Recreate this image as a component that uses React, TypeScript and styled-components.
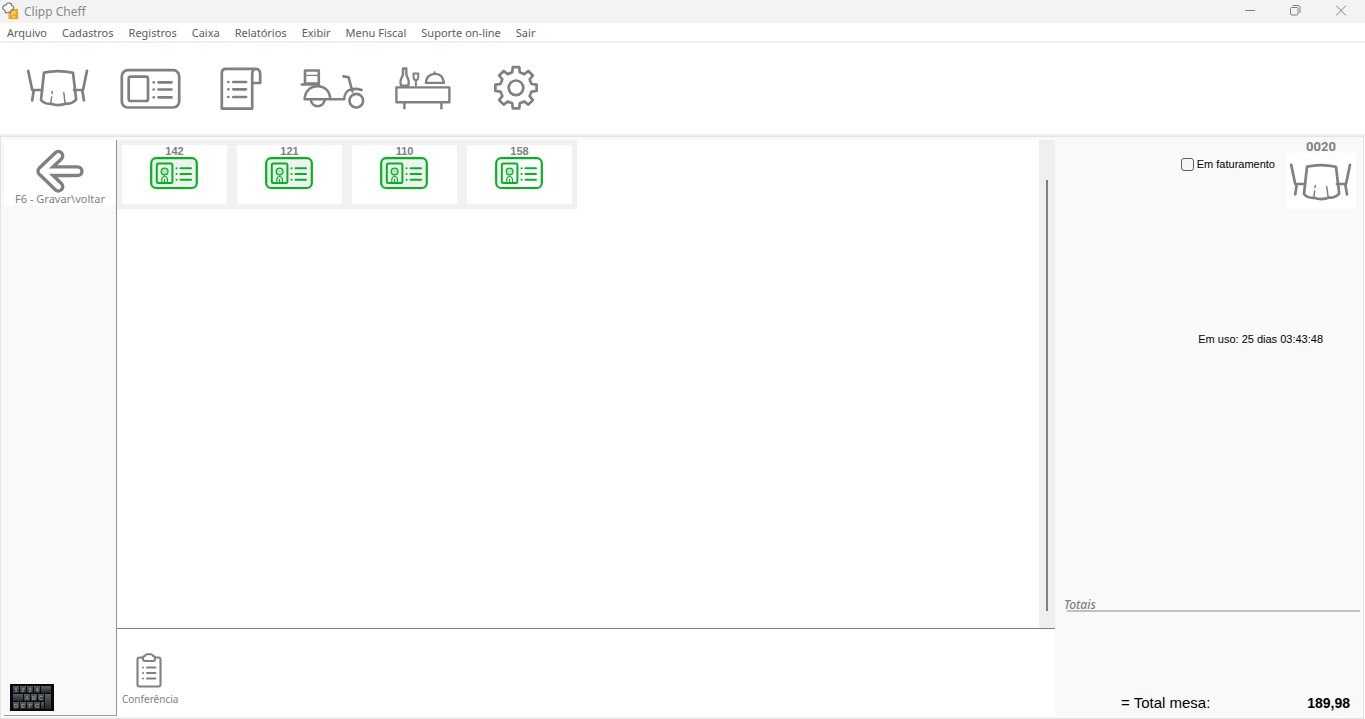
import React from "react";
import styled, { createGlobalStyle } from "styled-components";

const uiFont = '"Noto Sans", "Open Sans", sans-serif';
const labelFont = '"Liberation Sans", Arial, sans-serif';

const GlobalStyle = createGlobalStyle`
  * { box-sizing: border-box; }
  body { margin: 0; background: #ffffff; font-family: ${uiFont}; }
  button { border: 0; padding: 0; background: none; font: inherit; color: inherit; cursor: pointer; }
  h1, h2, p { margin: 0; font-weight: normal; }
  svg { display: block; }
`;

const Window = styled.div`
  display: flex;
  flex-direction: column;
  min-height: 100vh;
`;

const TitleBar = styled.header`
  display: flex;
  align-items: flex-start;
  height: 23px;
  padding: 0 1px 0 2px;
  background: #f3f3f3;
`;

const Title = styled.h1`
  flex: 1;
  margin-left: 4px;
  font-size: 12px;
  line-height: 23px;
  color: #8a8a8a;
`;

const WindowButton = styled.button`
  display: flex;
  align-items: center;
  justify-content: center;
  width: 46px;
  height: 21px;
`;

const MenuBar = styled.nav`
  display: flex;
  gap: 15px;
  height: 20px;
  padding-left: 7px;
  border-bottom: 2px solid #f0f0f0;
`;

const MenuItem = styled.button`
  font-size: 11px;
  line-height: 20px;
  color: #5c5c5c;
  white-space: nowrap;
`;

const Toolbar = styled.div`
  display: flex;
  align-items: center;
  height: 93px;
  padding: 0 0 2px 11px;
  border-bottom: 2px solid #f0f0f0;
`;

const ToolButton = styled.button`
  display: flex;
  justify-content: center;
  width: 92px;
`;

const Workspace = styled.main`
  flex: 1;
  display: grid;
  grid-template-columns: 113px minmax(0, 1fr) 308px;
  margin-right: 1px;
  padding: 3px 0 2px 3px;
  border: 1px solid #e4e4e4;
  background: #f9f9f9;
`;

const Sidebar = styled.aside`
  display: flex;
  flex-direction: column;
  justify-content: space-between;
  align-items: flex-start;
  border-right: 1px solid #909090;
  border-bottom: 1px solid #a0a0a0;
`;

const BackButton = styled.button`
  display: flex;
  flex-direction: column;
  align-items: center;
  width: 100%;
  height: 65px;
  padding-top: 9px;
  background: #ffffff;
  font-size: 11px;
  line-height: 12px;
  color: #808080;
  white-space: nowrap;
`;

const KeyboardButton = styled.button`
  margin: 0 0 4px 6px;
`;

const Center = styled.section`
  display: flex;
  flex-direction: column;
  background: #ffffff;
`;

const CardArea = styled.div`
  flex: 1;
  display: flex;
  justify-content: space-between;
  align-items: flex-start;
  border-bottom: 1px solid #808080;
`;

const CardStrip = styled.div`
  display: flex;
  gap: 10px;
  padding: 5px;
  background: #f1f1f1;
`;

const CardTile = styled.button`
  display: flex;
  flex-direction: column;
  align-items: center;
  width: 105px;
  height: 59px;
  background: #ffffff;
  font-family: ${labelFont};
  font-size: 11px;
  font-weight: bold;
  line-height: 12px;
  color: #808080;
`;

const ScrollTrack = styled.div`
  align-self: stretch;
  display: flex;
  justify-content: center;
  width: 16px;
  padding: 40px 0 17px;
  background: #efefef;
`;

const ScrollThumb = styled.div`
  width: 2px;
  background: #808080;
`;

const Actions = styled.div`
  display: flex;
  height: 87px;
  padding: 24px 0 0 5px;
`;

const ActionButton = styled.button`
  display: flex;
  flex-direction: column;
  align-items: flex-start;
  gap: 3px;
  height: 54px;
  font-size: 10px;
  line-height: 14px;
  color: #808080;
  svg { margin-left: 14px; }
`;

const Details = styled.aside`
  display: flex;
  flex-direction: column;
  font-family: ${labelFont};
  color: #000000;
`;

const DetailsHeader = styled.div`
  display: flex;
  justify-content: flex-end;
  gap: 11px;
  padding-right: 7px;
`;

const BillingLabel = styled.label`
  display: flex;
  align-items: center;
  gap: 3px;
  height: 15px;
  margin-top: 17px;
  font-size: 11px;
  line-height: 15px;
  white-space: nowrap;
`;

const CheckBox = styled.input`
  appearance: none;
  width: 13px;
  height: 13px;
  margin: 0;
  border: 1px solid #5f5f5f;
  border-radius: 3px;
  background: #f6f6f6;
  &:checked { background: #5f5f5f; }
`;

const TableBadge = styled.div`
  width: 70px;
  text-align: center;
  font-family: Roboto, sans-serif;
  font-size: 13px;
  font-weight: bold;
  line-height: 13px;
  color: #808080;
`;

const TablePicture = styled.div`
  padding: 5px 4px 3px 2px;
  background: #ffffff;
`;

const UsageTime = styled.p`
  margin: 123px 40px 0 0;
  text-align: right;
  font-size: 11px;
  line-height: 14px;
`;

const Totals = styled.section`
  margin-top: auto;
`;

const TotalsTitle = styled.h2`
  margin: 0 3px 0 12px;
  border-bottom: 2px solid #c0c0c0;
  font-family: ${uiFont};
  font-size: 12px;
  font-style: italic;
  font-weight: 500;
  line-height: 11px;
  text-indent: -3px;
  color: #808080;
`;

const TotalRow = styled.div`
  display: flex;
  justify-content: space-between;
  margin-top: 82px;
  padding: 0 13px 4px 66px;
  font-size: 15px;
  line-height: 18px;
`;

const TotalValue = styled.strong`
  font-size: 14px;
`;

const Stroke = styled.svg`
  fill: none;
  stroke: #808080;
  stroke-width: 2.7;
  stroke-linecap: round;
  stroke-linejoin: round;
`;

const ToolIcon = ({ children }: { children: React.ReactNode }) => (
  <Stroke width="64" height="48" viewBox="0 0 64 48" overflow="visible" aria-hidden="true">
    {children}
  </Stroke>
);

const TableIcon = () => (
  <ToolIcon>
    <path d="M3.2 6.8 7.2 26H17M8.6 27 7.2 36.5M62 6.8 58 26H49M57.4 27 59 36.5" />
    <path d="M19 8.6Q33 5.4 48 8.8L51.2 35.6Q47 40 41.5 39.6Q33.5 42.5 26 39.8Q19.5 40.2 16 36Z" />
    <path d="M27.4 27.5 26.9 29.5M26.6 33 26 38.5M38.8 28.5 40 38.5" strokeWidth="1.5" />
  </ToolIcon>
);

const CardIcon = () => (
  <ToolIcon>
    <rect x="4.8" y="6.2" width="57.4" height="37.3" rx="6" />
    <rect x="11.7" y="12.7" width="19.3" height="24.3" rx="2" />
    <path d="M41.5 18.3H54.5M41.5 25.5H54.5M41.5 33.3H54.5M36.7 18.3h.1M36.7 25.5h.1M36.7 33.3h.1" />
  </ToolIcon>
);

const ReceiptIcon = () => (
  <ToolIcon>
    <path d="M12.8 44.6V9Q12.8 4.8 17 4.8H47Q51.2 5 51.2 10.5V19H43.2M43.2 44.6V10.5Q43.2 5 47 5M12.8 44.6H43.2" />
    <path d="M24.3 18H37M24.3 25.3H37M24.3 33H37M19.3 18h.1M19.3 25.3h.1M19.3 33h.1" />
  </ToolIcon>
);

const ScooterIcon = () => (
  <ToolIcon>
    <g strokeWidth="2.6">
      <path d="M4 19.5V6.5H17.8V19.5Z" />
      <path d="M5 11.3H17" strokeWidth="1.3" />
      <path d="M.8 20.5H18" />
      <path d="M3.6 35.2C4 27 9.5 22.3 16.6 22.3S29 27 29.2 35.2M3.6 35.2H43.2C43.4 29.5 46.5 25.5 51 25.2Q56 24.2 60.6 26" />
      <path d="M42.5 12.4 47.6 13.3 51.4 27.5" />
      <path d="M9.9 36.5a6.9 6.9 0 0 0 13.6 0" />
      <circle cx="55.3" cy="36.7" r="6.8" />
    </g>
  </ToolIcon>
);

const BuffetIcon = () => (
  <ToolIcon>
    <g strokeWidth="2.4">
      <path d="M3.4 23.4H56.4V38.2H3.4ZM11.4 38.5V45.3M48.4 38.5V45.3" strokeLinecap="butt" />
      <path d="M10 4.5h3.3v5q0 2 1.4 4.5q1.3 2.5 1 5l-.6 2.8h-7l-.6-2.8q-.3-2.5 1-5q1.5-2.5 1.5-4.5Z" />
      <path d="M20.4 9.5h5l-.3 4.5q-.5 2.2-2.2 2.2t-2.2-2.2ZM22.9 16.5V21.5" strokeWidth="2" />
      <path d="M33 18.9q.3-8.4 8.5-9t9.5 9ZM41.5 8.5v.6" />
    </g>
  </ToolIcon>
);

const gearPoints = Array.from({ length: 8 }, (_, i) => {
  const a = (i * Math.PI) / 4;
  return [[15.5, -3.8], [20.6, -3.2], [20.6, 3.2], [15.5, 3.8]]
    .map(([r, w]) => `${(31 + r * Math.sin(a) + w * Math.cos(a)).toFixed(2)},${(23.8 - r * Math.cos(a) + w * Math.sin(a)).toFixed(2)}`)
    .join(" ");
}).join(" ");

const GearIcon = () => (
  <ToolIcon>
    <polygon points={gearPoints} />
    <circle cx="31" cy="23.8" r="7.3" />
  </ToolIcon>
);

const BackArrow = () => (
  <Stroke width="48" height="45" viewBox="0 0 48 45" aria-hidden="true">
    <path d="M22.3 7 6 22.7 22.3 38.5M6 22.7H42" strokeWidth="12.4" />
    <path d="M22.3 7 6 22.7 22.3 38.5M6 22.7H42" stroke="#fff" strokeWidth="5.4" />
  </Stroke>
);

const GreenCard = ({ shaded }: { shaded: boolean }) => (
  <svg width="49" height="33" viewBox="0 0 49 33" fill="none" stroke="#00b61c" aria-hidden="true">
    {shaded && <path d="M0 0H48V33H0Z" fill="#f1f1f1" stroke="none" />}
    <rect x="1.2" y="1.2" width="45.6" height="29.8" rx="5" strokeWidth="2.2" />
    <rect x="6.8" y="6.6" width="15.6" height="19.4" rx="1.5" strokeWidth="2" />
    <circle cx="14.6" cy="14.6" r="3.4" fill="#b5e5bc" strokeWidth="1.3" />
    <path d="M11.8 25V22.5Q12 19.5 14.6 19.5T17.4 22.5V25M14.6 22V25" strokeWidth="1.2" />
    <path d="M30.5 11.3H41M30.5 17H41M30.5 22.8H41M26.5 11.3h.1M26.5 17h.1M26.5 22.8h.1" strokeWidth="2" strokeLinecap="round" />
  </svg>
);

const ClipboardIcon = () => (
  <Stroke width="26" height="36" viewBox="0 0 26 36" aria-hidden="true">
    <g strokeWidth="2.1">
      <path d="M7 4.5H3.500Q1.500 4.500 1.500 6.500V31.500Q1.500 33.500 3.500 33.500H22.500Q24.500 33.500 24.500 31.500V6.500Q24.500 4.500 22.500 4.500H19" />
      <path d="M9 3Q9.500 1.200 11 1.200H15Q16.500 1.200 17 3Q19 3 19 5V6Q19 8 17 8H9Q7 8 7 6V5Q7 3 9 3Z" />
      <path d="M11 14.500H19.500M11 20H19.500M11 25.500H19.500M7 14.500h.1M7 20h.1M7 25.500h.1" strokeWidth="1.900" />
    </g>
  </Stroke>
);

const keyRows = [
  [[3, 6, "1"], [10, 6, "2"], [17, 6, "3"], [24, 6, "4"], [31, 10, ""]],
  [[3, 10, ""], [14, 6, "A"], [21, 6, "B"], [28, 6, "C"], [35, 6, ""]],
  [[3, 6, "D"], [10, 6, "E"], [17, 6, "F"], [24, 6, "G"], [31, 3, ""]],
] as [number, number, string][][];

const KeyboardIcon = () => (
  <svg width="44" height="27" viewBox="0 0 44 27" aria-hidden="true">
    <defs>
      <linearGradient id="key" x1="0" y1="0" x2="0" y2="1">
        <stop offset="0" stopColor="#5c6063" />
        <stop offset="1" stopColor="#23272a" />
      </linearGradient>
    </defs>
    <rect width="44" height="27" fill="#07090d" />
    {keyRows.map((row, y) =>
      row.map(([x, w, key]) => (
        <g key={`${x}-${y}`}>
          <rect x={x} y={2 + y * 8} width={w} height="7" fill="url(#key)" />
          <text x={x + 3} y={8 + y * 8} textAnchor="middle" fontSize="6" fontFamily="Liberation Sans, sans-serif" fontWeight="bold" fill="#8e9294">
            {key}
          </text>
        </g>
      ))
    )}
    <rect x="35" y="10" width="6" height="15" fill="url(#key)" />
  </svg>
);

const AppLogo = () => (
  <svg width="18" height="20" viewBox="0 -2 18 20" aria-hidden="true">
    <rect x="6.500" y="7" width="9.500" height="10" fill="#f6a30c" />
    <path d="M13.500 9.500Q10 9.500 10 12.500T13.500 15M10.500 11.500h3.500" fill="none" stroke="#fbd084" strokeWidth="1.400" />
    <path d="M3.500 11 3 8.500Q-.2 7 1 4.500Q2 2.700 4 3.200Q5 .3 7.500 1.200Q9.700 1.400 9.600 3.500Q12.300 4 11.500 6.500Q11 8 9.300 8L8.500 9.800Z" fill="#f9f9f9" stroke="#777" strokeWidth="1.200" strokeLinejoin="round" />
  </svg>
);

const windowControls = [
  { label: "Minimizar", path: "M1 5.500H11" },
  { label: "Restaurar", path: "M.5 3.500Q.5 2.500 1.500 2.500H7Q8 2.500 8 3.500V9Q8 10 7 10H1.500Q.5 10 .5 9ZM2.500 .5H8Q10 .5 10 2.500V8" },
  { label: "Fechar", path: "M0 .5 10 10.500M10 .5 0 10.500" },
];

const menus = ["Arquivo", "Cadastros", "Registros", "Caixa", "Relatórios", "Exibir", "Menu Fiscal", "Suporte on-line", "Sair"];

const tools = [
  { label: "Mesas", Icon: TableIcon },
  { label: "Cartões", Icon: CardIcon },
  { label: "Comandas", Icon: ReceiptIcon },
  { label: "Entregas", Icon: ScooterIcon },
  { label: "Balcão", Icon: BuffetIcon },
  { label: "Configurações", Icon: GearIcon },
];

const cards = [
  { number: "142", shaded: true },
  { number: "121", shaded: true },
  { number: "110", shaded: true },
  { number: "158", shaded: false },
];

export default function App() {
  return (
    <Window>
      <GlobalStyle />
      <TitleBar>
        <AppLogo />
        <Title>Clipp Cheff</Title>
        {windowControls.map(({ label, path }) => (
          <WindowButton key={label} aria-label={label}>
            <svg width="11" height="11" viewBox="0 0 11 11" fill="none" stroke="#808080">
              <path d={path} />
            </svg>
          </WindowButton>
        ))}
      </TitleBar>
      <MenuBar>
        {menus.map((menu) => (
          <MenuItem key={menu}>{menu}</MenuItem>
        ))}
      </MenuBar>
      <Toolbar>
        {tools.map(({ label, Icon }) => (
          <ToolButton key={label} aria-label={label}>
            <Icon />
          </ToolButton>
        ))}
      </Toolbar>
      <Workspace>
        <Sidebar>
          <BackButton>
            <BackArrow />
            F6 - Gravar\voltar
          </BackButton>
          <KeyboardButton aria-label="Teclado">
            <KeyboardIcon />
          </KeyboardButton>
        </Sidebar>
        <Center>
          <CardArea>
            <CardStrip>
              {cards.map(({ number, shaded }) => (
                <CardTile key={number}>
                  {number}
                  <GreenCard shaded={shaded} />
                </CardTile>
              ))}
            </CardStrip>
            <ScrollTrack>
              <ScrollThumb />
            </ScrollTrack>
          </CardArea>
          <Actions>
            <ActionButton>
              <ClipboardIcon />
              Conferência
            </ActionButton>
          </Actions>
        </Center>
        <Details>
          <DetailsHeader>
            <BillingLabel>
              <CheckBox type="checkbox" />
              Em faturamento
            </BillingLabel>
            <TableBadge>
              0020
              <TablePicture>
                <TableIcon />
              </TablePicture>
            </TableBadge>
          </DetailsHeader>
          <UsageTime>Em uso: 25 dias 03:43:48</UsageTime>
          <Totals>
            <TotalsTitle>Totais</TotalsTitle>
            <TotalRow>
              <span>= Total mesa:</span>
              <TotalValue>189,98</TotalValue>
            </TotalRow>
          </Totals>
        </Details>
      </Workspace>
    </Window>
  );
}
